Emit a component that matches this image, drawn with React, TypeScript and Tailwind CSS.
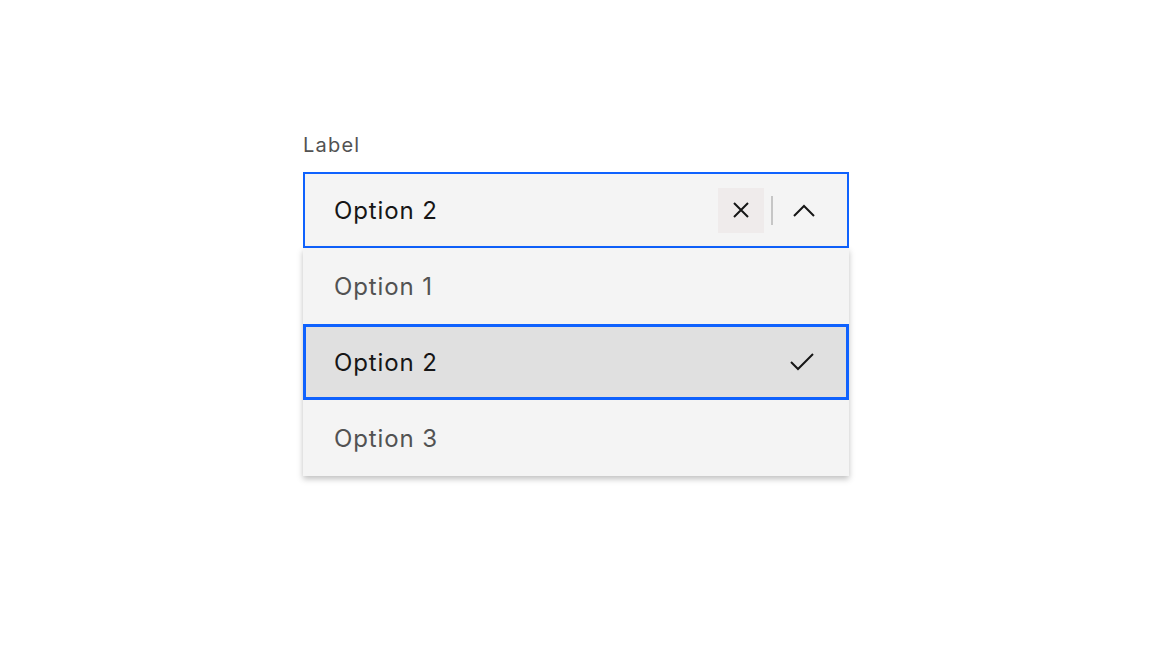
import { useState } from "react";

const OPTIONS = ["Option 1", "Option 2", "Option 3"];

export default function App() {
  const [selected, setSelected] = useState("Option 2");

  return (
    <div className="min-h-screen w-full bg-white flex justify-center pt-[131px] font-['Inter','Noto_Sans',sans-serif]">
      <div className="w-[546px]">
        {/* Label */}
        <div className="text-[20px] leading-[28px] tracking-[1.2px] text-[#525252] mb-[13px]">Label</div>

        {/* Field */}
        <div className="h-[76px] border-2 border-[#0f62fe] bg-[#f4f4f4] flex items-center pl-[29px] pr-[32px]">
          <span className="flex-1 text-[24px] tracking-[0.9px] text-[#161616] pt-[2px]">{selected}</span>
          <button className="w-[46px] h-[45px] bg-[#efebeb] flex items-center justify-center">
            <svg width="18" height="18" viewBox="0 0 18 18" fill="none" stroke="#161616" strokeWidth="2">
              <path d="M2 2l14 14M16 2L2 16" />
            </svg>
          </button>
          <div className="w-[2px] h-[29px] bg-[#c6c6c6] ml-[7px] mr-[20px]" />
          <svg width="22" height="13" viewBox="0 0 22 13" fill="none" stroke="#161616" strokeWidth="2">
            <path d="M1 12L11 2l10 10" />
          </svg>
        </div>

        {/* Menu */}
        <div className="bg-[#f4f4f4] shadow-[0_3px_6px_rgba(0,0,0,0.25)]">
          {OPTIONS.map((o) => {
            const active = o === selected;
            return (
              <div
                key={o}
                onClick={() => setSelected(o)}
                className={
                  active
                    ? "h-[76px] border-[3px] border-[#0f62fe] bg-[#e0e0e0] flex items-center pl-[28px] pr-[31px]"
                    : "h-[76px] flex items-center pl-[31px] pr-[34px]"
                }
              >
                <span
                  className={
                    active
                      ? "flex-1 text-[24px] tracking-[0.9px] text-[#161616] pt-[2px]"
                      : "flex-1 text-[24px] tracking-[0.9px] text-[#525252] pt-[2px]"
                  }
                >
                  {o}
                </span>
                {active && (
                  <svg width="26" height="20" viewBox="0 0 26 20" fill="none" stroke="#161616" strokeWidth="2">
                    <path d="M2 10l7 7L24 2" />
                  </svg>
                )}
              </div>
            );
          })}
        </div>
      </div>
    </div>
  );
}
